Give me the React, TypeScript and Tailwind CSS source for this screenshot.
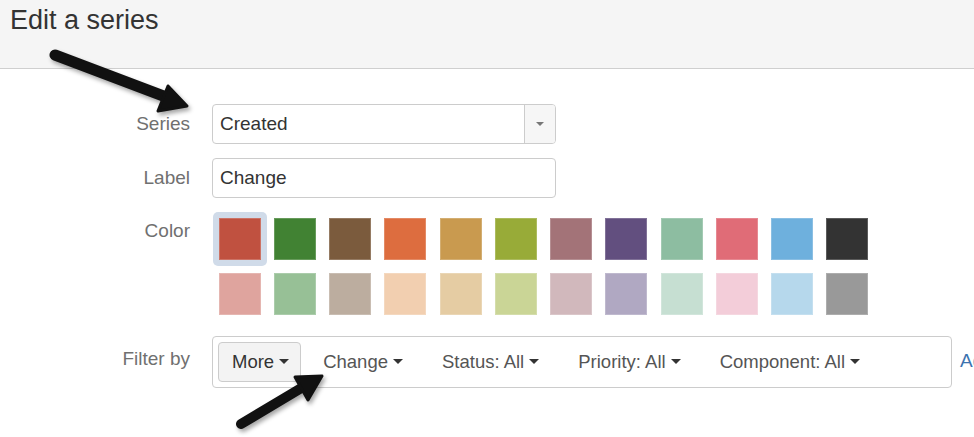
import React from 'react';

const topRow = ['#c05140', '#418233', '#7b5b3d', '#dd6d3f', '#c99a4f', '#98ab38', '#a37378', '#624f7f', '#8dbda1', '#e06c77', '#6eb0dd', '#333333'];
const bottomRow = ['#dfa49e', '#97c096', '#bcad9f', '#f2cfb0', '#e5cca3', '#cad596', '#d1b8bc', '#b0a8c2', '#c6dfd2', '#f3cdd9', '#b6d8ec', '#999999'];

const Caret = ({ className = '' }: { className?: string }) => (
  <span className={`inline-block w-0 h-0 border-l-[5px] border-r-[5px] border-t-[5px] border-l-transparent border-r-transparent ${className}`} />
);

const FormRow = ({ label, labelClass = 'h-[40px] leading-[40px]', children }: { label: string; labelClass?: string; children: React.ReactNode }) => (
  <div className="flex items-start gap-[22px]">
    <div className={`w-[190px] shrink-0 text-right text-[19px] text-[#707070] ${labelClass}`}>{label}</div>
    {children}
  </div>
);

const Arrows = () => (
  <svg
    className="absolute inset-0 pointer-events-none drop-shadow-[2px_3px_2px_rgba(0,0,0,0.35)]"
    width="974"
    height="437"
    viewBox="0 0 974 437"
  >
    <line x1="55" y1="55" x2="166" y2="97" stroke="#111" strokeWidth="11" strokeLinecap="round" />
    <polygon points="187,106 158,111 168,86" fill="#111" stroke="#111" strokeWidth="3" strokeLinejoin="round" />
    <line x1="241" y1="424" x2="303" y2="387" stroke="#111" strokeWidth="10" strokeLinecap="round" />
    <polygon points="322,376 308,400 295,377" fill="#111" stroke="#111" strokeWidth="3" strokeLinejoin="round" />
  </svg>
);

export default function App() {
  const selected = 0;

  return (
    <div className="relative w-[974px] h-[437px] overflow-hidden bg-white font-['Liberation_Sans',Arial,sans-serif]">
      <div className="h-[69px] bg-[#f5f5f5] border-b border-[#cfcfcf] pl-[10px] pt-[7px]">
        <h1 className="text-[27px] leading-[27px] text-[#333]">Edit a series</h1>
      </div>

      <div className="pt-[35px] flex flex-col">
        <FormRow label="Series">
          <div className="flex w-[344px] h-[40px] border border-[#ccc] rounded-[4px] overflow-hidden">
            <div className="flex-1 pl-[7px] text-[19px] leading-[38px] text-[#333]">Created</div>
            <div className="w-[31px] border-l border-[#ccc] bg-[#f6f6f6] flex items-center justify-center">
              <span className="inline-block w-0 h-0 border-l-[4px] border-r-[4px] border-t-[4px] border-l-transparent border-r-transparent border-t-[#777]" />
            </div>
          </div>
        </FormRow>

        <div className="mt-[14px]">
          <FormRow label="Label">
            <div className="w-[344px] h-[40px] border border-[#ccc] rounded-[4px] pl-[7px] text-[19px] leading-[38px] text-[#333]">Change</div>
          </FormRow>
        </div>

        <div className="mt-[13px]">
          <FormRow label="Color">
            <div className="flex flex-col">
              {[topRow, bottomRow].map((row, r) => (
                <div key={r} className="flex">
                  {row.map((c, i) => {
                    const isSel = r === 0 && i === selected;
                    return (
                      <div key={c} className="w-[55.25px] h-[55.25px] flex items-center justify-center">
                        <div className={`w-[54px] h-[54px] rounded-[5px] flex items-center justify-center ${isSel ? 'bg-[#d0dbe9]' : ''}`}>
                          <div className="w-[42px] h-[42px] border border-white/20" style={{ backgroundColor: c }} />
                        </div>
                      </div>
                    );
                  })}
                </div>
              ))}
            </div>
          </FormRow>
        </div>

        <div className="mt-[14px]">
          <FormRow label="Filter by" labelClass="h-[46px] leading-[46px]">
            <div className="flex items-center">
              <div className="w-[740px] h-[52px] border border-[#ccc] rounded-[4px] px-[5px] flex items-center gap-[5px] text-[18.5px]">
                <button className="h-[40px] pl-[13px] pr-[11px] bg-[#f3f3f3] border border-[#ccc] rounded-[4px] text-[#333] flex items-center">
                  More
                  <Caret className="ml-[5px] border-t-[#333]" />
                </button>
                {['Change', 'Status: All', 'Priority: All', 'Component: All'].map((t) => (
                  <button key={t} className="h-[40px] px-[17px] text-[#555] flex items-center">
                    {t}
                    <Caret className="ml-[5px] border-t-[#333]" />
                  </button>
                ))}
              </div>
              <span className="ml-[8px] text-[19px] text-[#3b73af] whitespace-nowrap">Add</span>
            </div>
          </FormRow>
        </div>
      </div>

      <Arrows />
    </div>
  );
}
